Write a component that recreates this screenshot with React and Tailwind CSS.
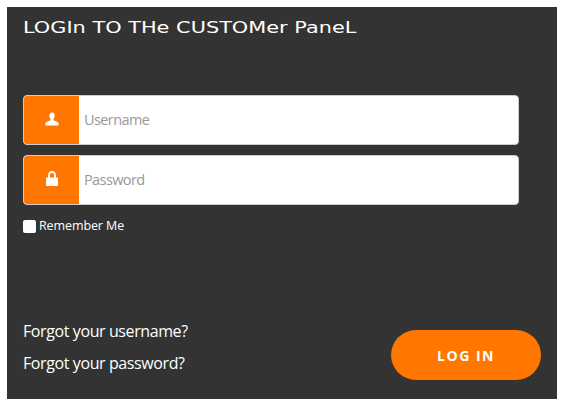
import React from 'react';

function UserIcon() {
    return (
        <svg width="14" height="14" viewBox="0 0 14 14" fill="#fff">
            <path d="M7 0.5C5 0.5 4.2 2 4.3 3.8C4.4 5.4 5 6.6 5.5 7.2C5.7 7.9 5.3 8.4 4.4 8.8C2.8 9.5 1 9.9 0.5 11V13.5H13.5V11C13 9.9 11.2 9.5 9.6 8.8C8.7 8.4 8.3 7.9 8.5 7.2C9 6.6 9.6 5.4 9.7 3.8C9.8 2 9 0.5 7 0.5Z" />
        </svg>
    );
}

function LockIcon() {
    return (
        <svg width="12" height="15" viewBox="0 0 12 15" fill="#fff">
            <path d="M6 0C3.6 0 2 1.8 2 4.2V6.5H1C0.4 6.5 0 6.9 0 7.5V14C0 14.6 0.4 15 1 15H11C11.6 15 12 14.6 12 14V7.5C12 6.9 11.6 6.5 11 6.5H10V4.2C10 1.8 8.4 0 6 0ZM6 2C7.3 2 8 3 8 4.2V6.5H4V4.2C4 3 4.7 2 6 2Z" />
        </svg>
    );
}

function Field({ icon, placeholder, type }) {
    return (
        <div className="flex h-[50px] w-[496px] overflow-hidden rounded-[4px] border border-[#ccc] bg-white">
            <div className="flex w-[55px] items-center justify-center bg-[#ff7700] pb-[3px]">{icon}</div>
            <input
                type={type}
                placeholder={placeholder}
                className="flex-1 px-[5px] font-['Open_Sans',sans-serif] text-[14.5px] tracking-[-0.6px] text-gray-700 outline-none placeholder:text-[#999]"
            />
        </div>
    );
}

export default function App() {
    return (
        <div className="h-[406px] w-[565px] overflow-hidden bg-white p-[7px] font-['Open_Sans',sans-serif]">
            <div className="flex h-[392px] w-[550px] flex-col bg-[#333333] pl-4 pr-4 text-white">
                <h1 className="mt-[11px] h-[77px] w-fit origin-left scale-x-[1.39] whitespace-nowrap font-['DejaVu_Sans',sans-serif] text-[15px] leading-[20px] font-normal">
                    LOGIn TO THe CUSTOMer PaneL
                </h1>
                <div className="flex flex-col gap-[10px]">
                    <Field icon={<UserIcon />} placeholder="Username" type="text" />
                    <Field icon={<LockIcon />} placeholder="Password" type="password" />
                </div>
                <label className="mt-[13px] flex items-center gap-[3px] text-[12.5px] leading-[16px] tracking-[-0.1px]">
                    <input type="checkbox" className="h-[13px] w-[13px] appearance-none rounded-[2px] bg-white" />
                    Remember Me
                </label>
                <div className="mt-[86px] flex items-start justify-between">
                    <div className="flex flex-col gap-[10px] text-[16px] leading-[22px] tracking-[-0.4px]">
                        <a href="#">Forgot your username?</a>
                        <a href="#">Forgot your password?</a>
                    </div>
                    <button className="mt-[10px] h-[50px] w-[150px] rounded-[25px] bg-[#ff7700] text-[14px] font-bold tracking-[1.5px] text-white">
                        LOG IN
                    </button>
                </div>
            </div>
        </div>
    );
}
